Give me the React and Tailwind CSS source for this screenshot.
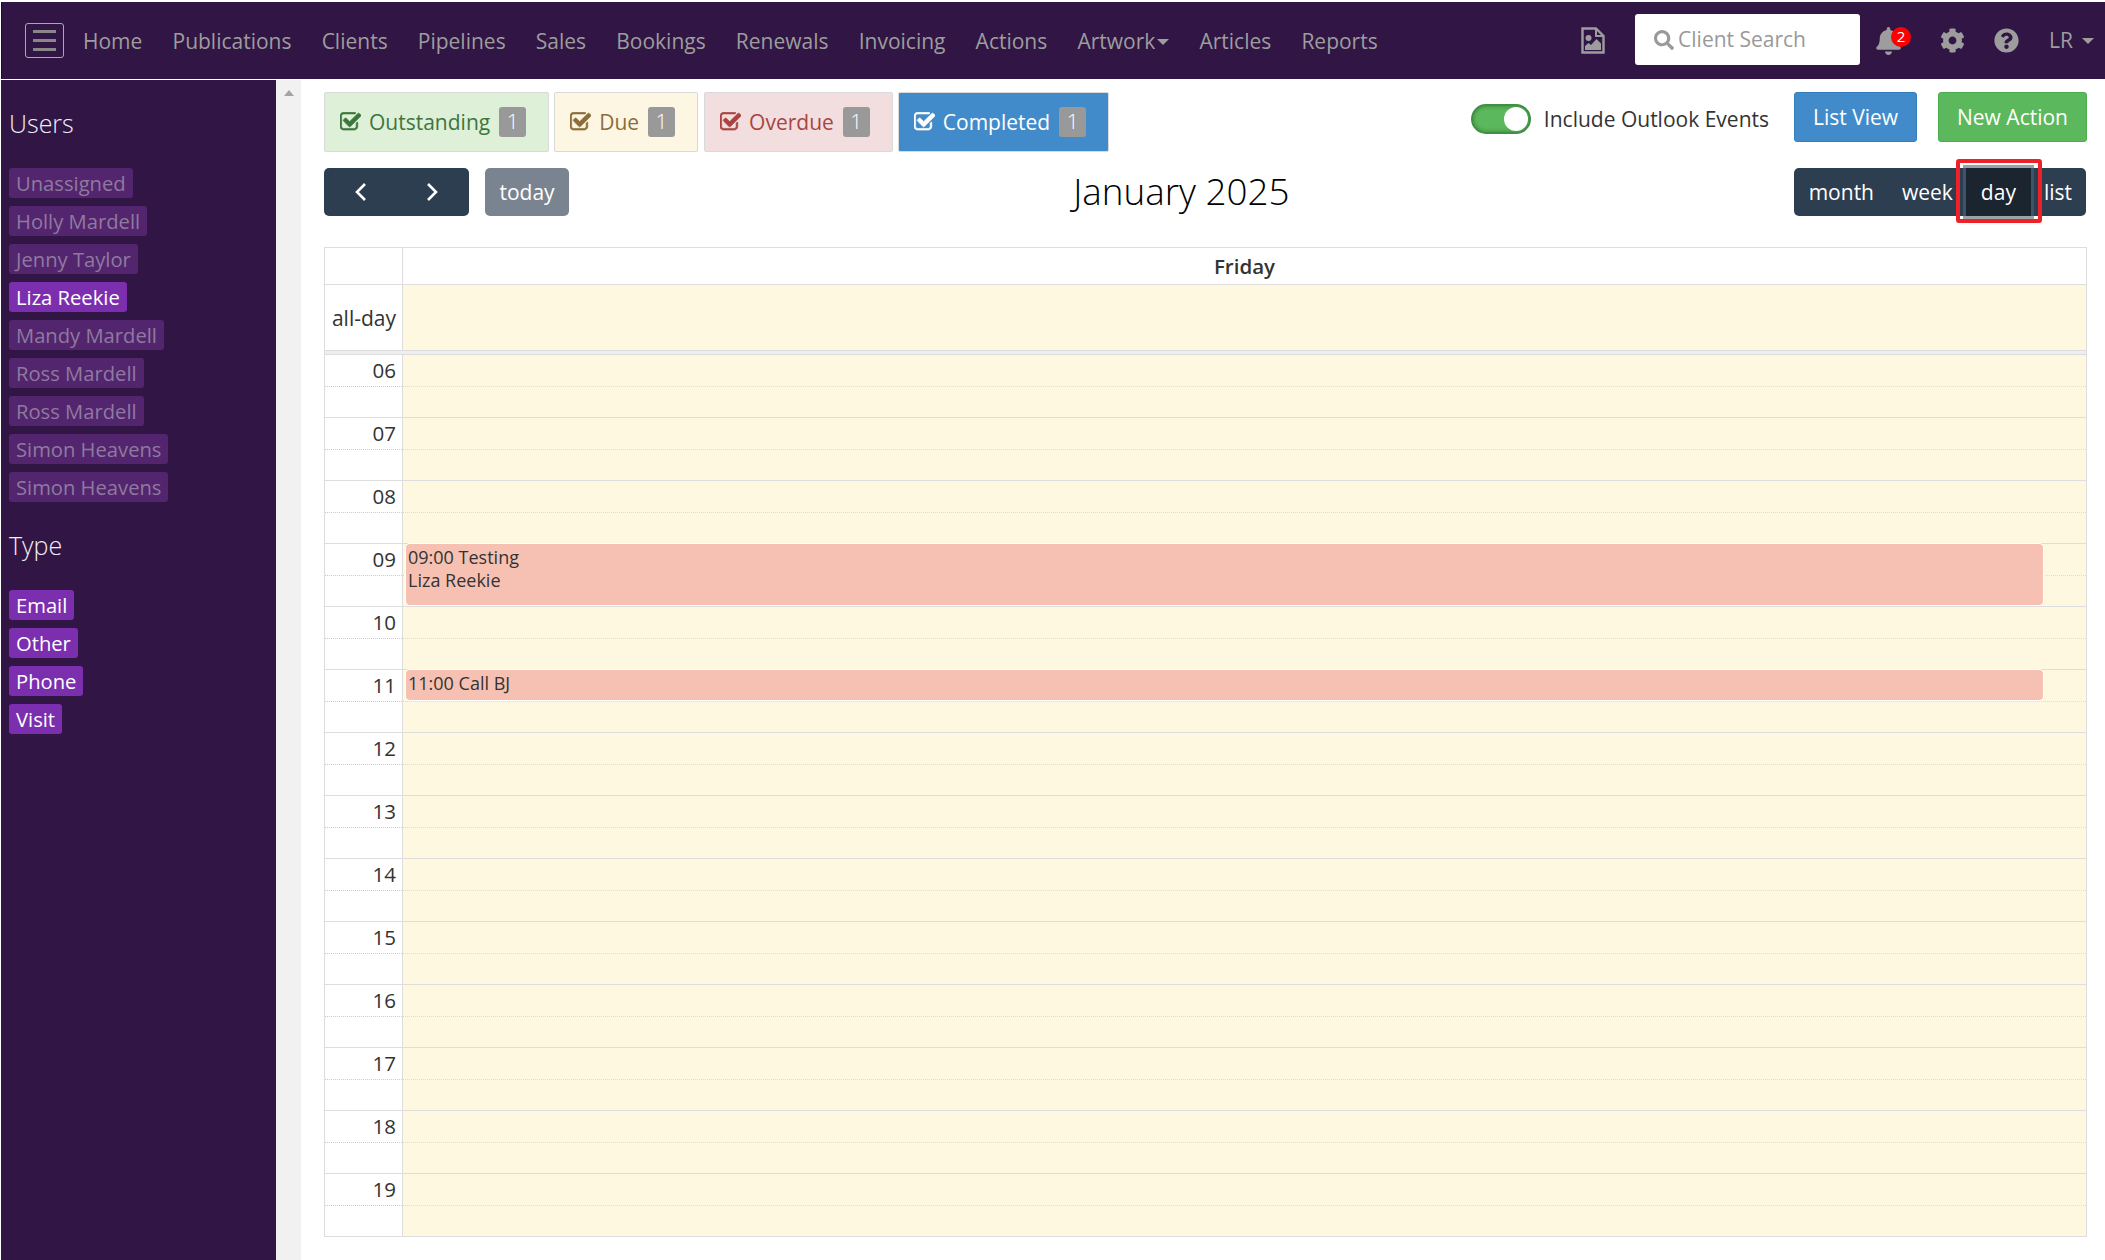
import React from "react";
import { FaBell, FaCog, FaQuestionCircle, FaSearch } from "react-icons/fa";

const navLinks = ["Home", "Publications", "Clients", "Pipelines", "Sales", "Bookings", "Renewals", "Invoicing", "Actions"];
const users = [
  "Unassigned",
  "Holly Mardell",
  "Jenny Taylor",
  "Liza Reekie",
  "Mandy Mardell",
  "Ross Mardell",
  "Ross Mardell",
  "Simon Heavens",
  "Simon Heavens",
];
const types = ["Email", "Other", "Phone", "Visit"];
const hours = ["06", "07", "08", "09", "10", "11", "12", "13", "14", "15", "16", "17", "18", "19"];

const CheckSquare = ({ className }) => (
  <svg viewBox="64 192 1664 1408" className={className} fill="currentColor" stroke="currentColor" strokeWidth="50">
    <path d="M1472 930v318q0 119-84.5 203.5t-203.5 84.5h-832q-119 0-203.5-84.5t-84.5-203.5v-832q0-119 84.5-203.5t203.5-84.5h832q63 0 117 25 15 7 18 23 3 17-9 29l-49 49q-10 10-23 10-3 0-9-2-23-6-45-6h-832q-66 0-113 47t-47 113v832q0 66 47 113t113 47h832q66 0 113-47t47-113v-254q0-13 9-22l64-64q10-10 23-10 6 0 12 3 20 8 20 29zm231-489l-814 814q-24 24-57 24t-57-24l-430-430q-24-24-24-57t24-57l110-110q24-24 57-24t57 24l263 263 647-647q24-24 57-24t57 24l110 110q24 24 24 57t-24 57z" />
  </svg>
);

const FileImage = ({ className }) => (
  <svg viewBox="0 0 24 27" className={className} fill="none" stroke="currentColor">
    <path d="M1.5 1.5H15L22.5 9V25.5H1.5Z" strokeWidth="2.4" />
    <path d="M15 1.5V9H22.5" strokeWidth="2" />
    <circle cx="7.5" cy="11" r="3" fill="currentColor" stroke="none" />
    <path d="M4 23V19L7.5 16L10 18L15.5 12L20 16.5V23Z" fill="currentColor" stroke="none" />
  </svg>
);

const Caret = ({ className = "" }) => (
  <span className={`inline-block w-0 h-0 border-x-[6px] border-x-transparent border-t-[6px] border-t-[#9d9d9d] ${className}`} />
);

const Tab = ({ label, className, gap }) => (
  <div className={`h-[60px] flex items-center pl-[15px] border border-[#d9d9d9] rounded-[2px] ${gap} ${className}`}>
    <CheckSquare className="w-[21px] h-[20px] mr-[8px]" />
    <span className="pt-[1px]">{label}</span>
    <span className="ml-[9px] mr-[22px] w-[27px] h-[30px] flex items-center justify-center rounded-[3px] bg-[#999] text-white font-light">1</span>
  </div>
);

const Pill = ({ active, children }) => (
  <span
    className={`h-[30px] pl-[7px] pr-[7px] flex items-center self-start rounded-[3px] ${
      active ? "bg-[#7b2fae] text-white" : "bg-[#53256f] text-[#8f7a9e]"
    }`}
  >
    {children}
  </span>
);

const Chevron = ({ d }) => (
  <svg viewBox="0 0 14 20" className="w-[14px] h-[20px]" fill="none" stroke="white" strokeWidth="2.6">
    <path d={d} />
  </svg>
);

const HourRow = ({ hour }) => (
  <div className="flex h-[63px] border-b border-[#ddd]">
    <div className="w-[78px] shrink-0 border-r border-[#ddd] flex flex-col">
      <div className="h-[32px] border-b border-dotted border-[#ccc] text-right pr-[6px] text-[20.5px] leading-[31px]">{hour}</div>
    </div>
    <div className="flex-1 bg-[#fff8e1] relative">
      <div className="h-[32px] border-b border-dotted border-[#ddd]" />
      {hour === "09" && (
        <div className="absolute top-0 left-[3px] right-[43px] h-[61px] bg-[#f6c1b2] rounded-[4px] shadow-[0_0_0_1px_#fff] pl-[2px] pt-[2px] text-[18px] leading-[23px] z-10">
          09:00 Testing
          <br />
          Liza Reekie
        </div>
      )}
      {hour === "11" && (
        <div className="absolute top-0 left-[3px] right-[43px] h-[30px] bg-[#f6c1b2] rounded-[4px] shadow-[0_0_0_1px_#fff] pl-[2px] pt-[2px] text-[18px] leading-[23px] z-10">
          11:00 Call BJ
        </div>
      )}
    </div>
  </div>
);

export default function App() {
  return (
    <div className="w-[2105px] h-[1260px] overflow-hidden bg-white flex flex-col pt-[2px] text-[#333] text-[21px] font-['Open_Sans',sans-serif]">
      {/* Top nav */}
      <div className="h-[77px] shrink-0 ml-[1px] bg-[#311544] border-l border-[#1b0c26] flex items-center text-[#9d9d9d] pr-[11px]">
        <div className="ml-[23px] w-[39px] h-[35px] border border-[#aaa] rounded-[3px] flex flex-col items-center justify-center gap-[6px]">
          <span className="w-[23px] h-[3px] bg-[#888]" />
          <span className="w-[23px] h-[3px] bg-[#888]" />
          <span className="w-[23px] h-[3px] bg-[#888]" />
        </div>
        <div className="ml-[19px] flex items-center gap-[30.15px] pt-[2px]">
          {navLinks.map((l) => (
            <span key={l}>{l}</span>
          ))}
          <span className="flex items-center">
            Artwork
            <Caret className="ml-[2px]" />
          </span>
          <span>Articles</span>
          <span>Reports</span>
        </div>
        <FileImage className="ml-auto w-[24px] h-[27px]" />
        <div className="ml-[30px] w-[225px] h-[51px] mb-[2px] bg-white rounded-[3px] flex items-center pl-[19px] text-[#999]">
          <FaSearch className="w-[20px] h-[20px] mr-[4px]" />
          Client Search
        </div>
        <div className="ml-[15px] relative">
          <FaBell className="w-[27px] h-[28px]" />
          <span className="absolute top-0 -right-[9px] w-[20px] h-[20px] rounded-full bg-[#f00] text-white text-[15px] flex items-center justify-center">2</span>
        </div>
        <FaCog className="ml-[38px] w-[25px] h-[25px]" />
        <FaQuestionCircle className="ml-[29px] w-[25px] h-[25px]" />
        <span className="ml-[30px]">LR</span>
        <Caret className="ml-[9px]" />
      </div>
      <div className="h-px shrink-0" />

      <div className="flex-1 flex min-h-0">
        {/* Sidebar */}
        <div className="w-[275px] shrink-0 ml-[1px] bg-[#311544] pl-[8px] pt-[27px] flex flex-col text-[20.2px]">
          <h3 className="h-[33px] leading-[33px] text-[25px] font-light text-[#f3eef7]">Users</h3>
          <div className="mt-[28px] flex flex-col gap-[8px]">
            {users.map((u, i) => (
              <Pill key={i} active={u === "Liza Reekie"}>
                {u}
              </Pill>
            ))}
          </div>
          <h3 className="mt-[27px] h-[33px] leading-[33px] text-[25px] font-light text-[#f3eef7]">Type</h3>
          <div className="mt-[28px] flex flex-col gap-[8px]">
            {types.map((t) => (
              <Pill key={t} active>
                {t}
              </Pill>
            ))}
          </div>
        </div>

        {/* Scrollbar */}
        <div className="w-[25px] shrink-0 bg-[#f1f1f1] flex justify-center pt-[10px]">
          <span className="w-0 h-0 border-x-[5px] border-x-transparent border-b-[6px] border-b-[#a3a3a3]" />
        </div>

        {/* Main */}
        <div className="flex-1 min-w-0 pl-[23px] pr-[18px] pt-[12px]">
          <div className="flex items-start">
            <Tab label="Outstanding" className="bg-[#dff0d8] text-[#3c763d]" gap="mr-[5px]" />
            <Tab label="Due" className="bg-[#fcf6e3] text-[#8a6d3b]" gap="mr-[6px]" />
            <Tab label="Overdue" className="bg-[#f2dede] text-[#a94442]" gap="mr-[5px]" />
            <Tab label="Completed" className="bg-[#428bca] text-white" gap="" />
            <div className="ml-auto flex items-start">
              <div className="mt-[12px] w-[60px] h-[30px] rounded-full bg-[#5cb85c] border-[2px] border-[#3f8f44] shadow-[inset_0_0_4px_rgba(30,90,30,0.6)] flex items-center justify-end pr-[1px]">
                <span className="w-[24px] h-[24px] rounded-full bg-white" />
              </div>
              <span className="ml-[13px] mt-[11px] leading-[32px]">Include Outlook Events</span>
              <button className="ml-[25px] w-[123px] h-[50px] pt-[1px] rounded-[3px] bg-[#428bca] border border-[#357ebd] text-white">List View</button>
              <button className="ml-[21px] w-[149px] h-[50px] pt-[1px] rounded-[3px] bg-[#5cb85c] border border-[#4cae4c] text-white">New Action</button>
            </div>
          </div>

          <div className="mt-[16px] flex items-start justify-between h-[48px]">
            <div className="flex">
              <div className="w-[145px] h-[48px] rounded-[5px] bg-[#2c3e50] flex items-center justify-between px-[30px]">
                <Chevron d="M11 2 L3 10 L11 18" />
                <Chevron d="M3 2 L11 10 L3 18" />
              </div>
              <div className="ml-[16px] w-[84px] h-[48px] pt-[1px] rounded-[5px] bg-[#7a8490] text-white flex items-center justify-center">today</div>
            </div>
            <h2 className="text-[36.8px] font-light text-black leading-[46px]">January 2025</h2>
            <div className="mr-px h-[48px] rounded-[5px] bg-[#2c3e50] flex items-center text-white">
              <span className="pl-[15px] pr-[14px] pt-[1px]">month</span>
              <span className="pl-[14px] pr-[10px] pt-[1px]">week</span>
              <span className="relative w-[71px] h-[48px] pt-[1px] bg-[#1a252f] border-x-[3px] border-[#3e5468] flex items-center justify-center">
                day
                <span className="absolute -top-[3px] -left-[3px] -right-[3px] h-[3px] bg-[#9aa3a8]" />
                <span className="absolute -bottom-[3px] -left-[3px] -right-[3px] h-[3px] bg-[#9aa3a8]" />
                <span className="absolute -top-[9px] -bottom-[7px] -left-[10px] -right-[11px] border-[4px] border-[#ee2028] rounded-[3px]" />
              </span>
              <span className="pl-[10px] pr-[14px] pt-[1px]">list</span>
            </div>
          </div>

          {/* Calendar */}
          <div className="mt-[31px] border-x border-t border-[#ddd]">
            <div className="flex h-[37px] border-b border-[#ddd]">
              <div className="w-[78px] shrink-0 border-r border-[#ddd]" />
              <div className="flex-1 text-center text-[20.5px] font-semibold leading-[37px]">Friday</div>
            </div>
            <div className="flex h-[66px] border-b border-[#ddd]">
              <div className="w-[78px] shrink-0 border-r border-[#ddd] text-right pr-[6px] leading-[66px]">all-day</div>
              <div className="flex-1 bg-[#fff8e1]" />
            </div>
            <div className="h-[4px] bg-[#eee] border-b border-[#ddd]" />
            {hours.map((h) => (
              <HourRow key={h} hour={h} />
            ))}
          </div>
        </div>
      </div>
    </div>
  );
}
